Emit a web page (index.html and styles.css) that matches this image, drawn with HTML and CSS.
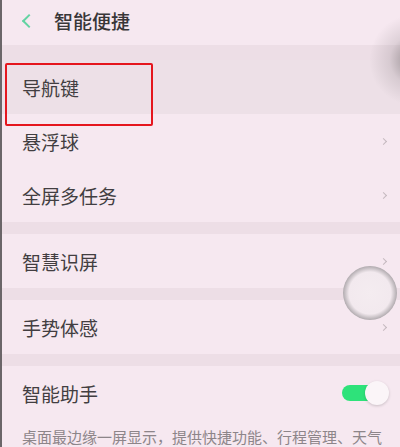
FILE: index.html
```html
<!DOCTYPE html>
<html lang="zh-CN">
<head>
    <meta charset="UTF-8">
    <meta name="viewport" content="width=device-width, initial-scale=1.0">
    <title>智能便捷</title>
    <link rel="stylesheet" href="styles.css">
</head>
<body>
    <div class="screen">
        <header class="topbar">
            <span class="back"></span>
            <h1>智能便捷</h1>
        </header>

        <div class="group">
            <div class="row pressed"><span>导航键</span></div>
            <div class="row"><span>悬浮球</span><i class="chevron"></i></div>
            <div class="row"><span>全屏多任务</span><i class="chevron"></i></div>
        </div>

        <div class="group">
            <div class="row"><span>智慧识屏</span><i class="chevron"></i></div>
        </div>

        <div class="group">
            <div class="row"><span>手势体感</span><i class="chevron"></i></div>
        </div>

        <div class="group">
            <div class="row">
                <span>智能助手</span>
                <span class="switch on"><span class="knob"></span></span>
            </div>
            <p class="desc">桌面最边缘一屏显示，提供快捷功能、行程管理、天气</p>
        </div>

        <div class="highlight"></div>
        <div class="float-ball"></div>
        <div class="shadow"></div>
    </div>
</body>
</html>
```

FILE: styles.css
```css
body {
    margin: 0;
    font-family: "Noto Sans CJK SC", "Noto Sans", sans-serif;
    background-color: #eddee6;
    color: #423e41;
}

.screen {
    position: relative;
    height: 447px;
    overflow: hidden;
    border-left: 2px solid #6b6669;
    background-color: #eddee6;
}

.topbar {
    height: 45px;
    display: flex;
    align-items: center;
    background-color: #f6e8f0;
    margin-bottom: 15px;
}

.back {
    width: 8px;
    height: 8px;
    margin-left: 22px;
    margin-right: 20px;
    border-left: 2px solid #63d3a2;
    border-bottom: 2px solid #63d3a2;
    transform: rotate(45deg);
    margin-top: -4px;
}

h1 {
    margin: 0;
    font-size: 19px;
    font-weight: 500;
    color: #383638;
    margin-top: -4px;
}

.group {
    background-color: #f6e8f0;
    margin-bottom: 12px;
}

.row {
    height: 54px;
    display: flex;
    align-items: center;
    justify-content: space-between;
    padding: 0 12px 0 20px;
    font-size: 19px;
}

.row.pressed {
    background-color: #ede0e7;
}

.chevron {
    width: 4px;
    height: 4px;
    border-right: 1px solid #c4b8bf;
    border-bottom: 1px solid #c4b8bf;
    transform: rotate(-45deg);
    margin-right: 2px;
}

.switch {
    position: relative;
    width: 45px;
    height: 16px;
    border-radius: 8px;
    background-color: #2ee27a;
    margin-right: 1px;
}

.knob {
    position: absolute;
    right: -2px;
    top: -4px;
    width: 24px;
    height: 24px;
    border-radius: 50%;
    background-color: #fbf5f8;
    box-shadow: 0 1px 3px rgba(0, 0, 0, 0.18);
}

.desc {
    margin: 0;
    padding: 6px 0 4px 20px;
    font-size: 15px;
    color: #8d8589;
    white-space: nowrap;
}

.highlight {
    position: absolute;
    left: 3px;
    top: 63px;
    width: 144px;
    height: 59px;
    border: 2px solid #e5161e;
    border-radius: 2px;
}

.float-ball {
    position: absolute;
    left: 341px;
    top: 266px;
    width: 54px;
    height: 54px;
    border-radius: 50%;
    background: radial-gradient(circle, #f4ecf0 0, #f2e9ee 55%, #b3adb1 70%, #c9c3c7 80%, rgba(210, 204, 208, 0.5) 100%);
}

.shadow {
    position: absolute;
    right: -30px;
    top: 15px;
    width: 60px;
    height: 90px;
    border-radius: 50%;
    background: radial-gradient(ellipse at 75% 50%, rgba(80, 75, 76, 0.6) 0, rgba(150, 140, 145, 0.25) 40%, rgba(240, 230, 236, 0) 72%);
}
```
